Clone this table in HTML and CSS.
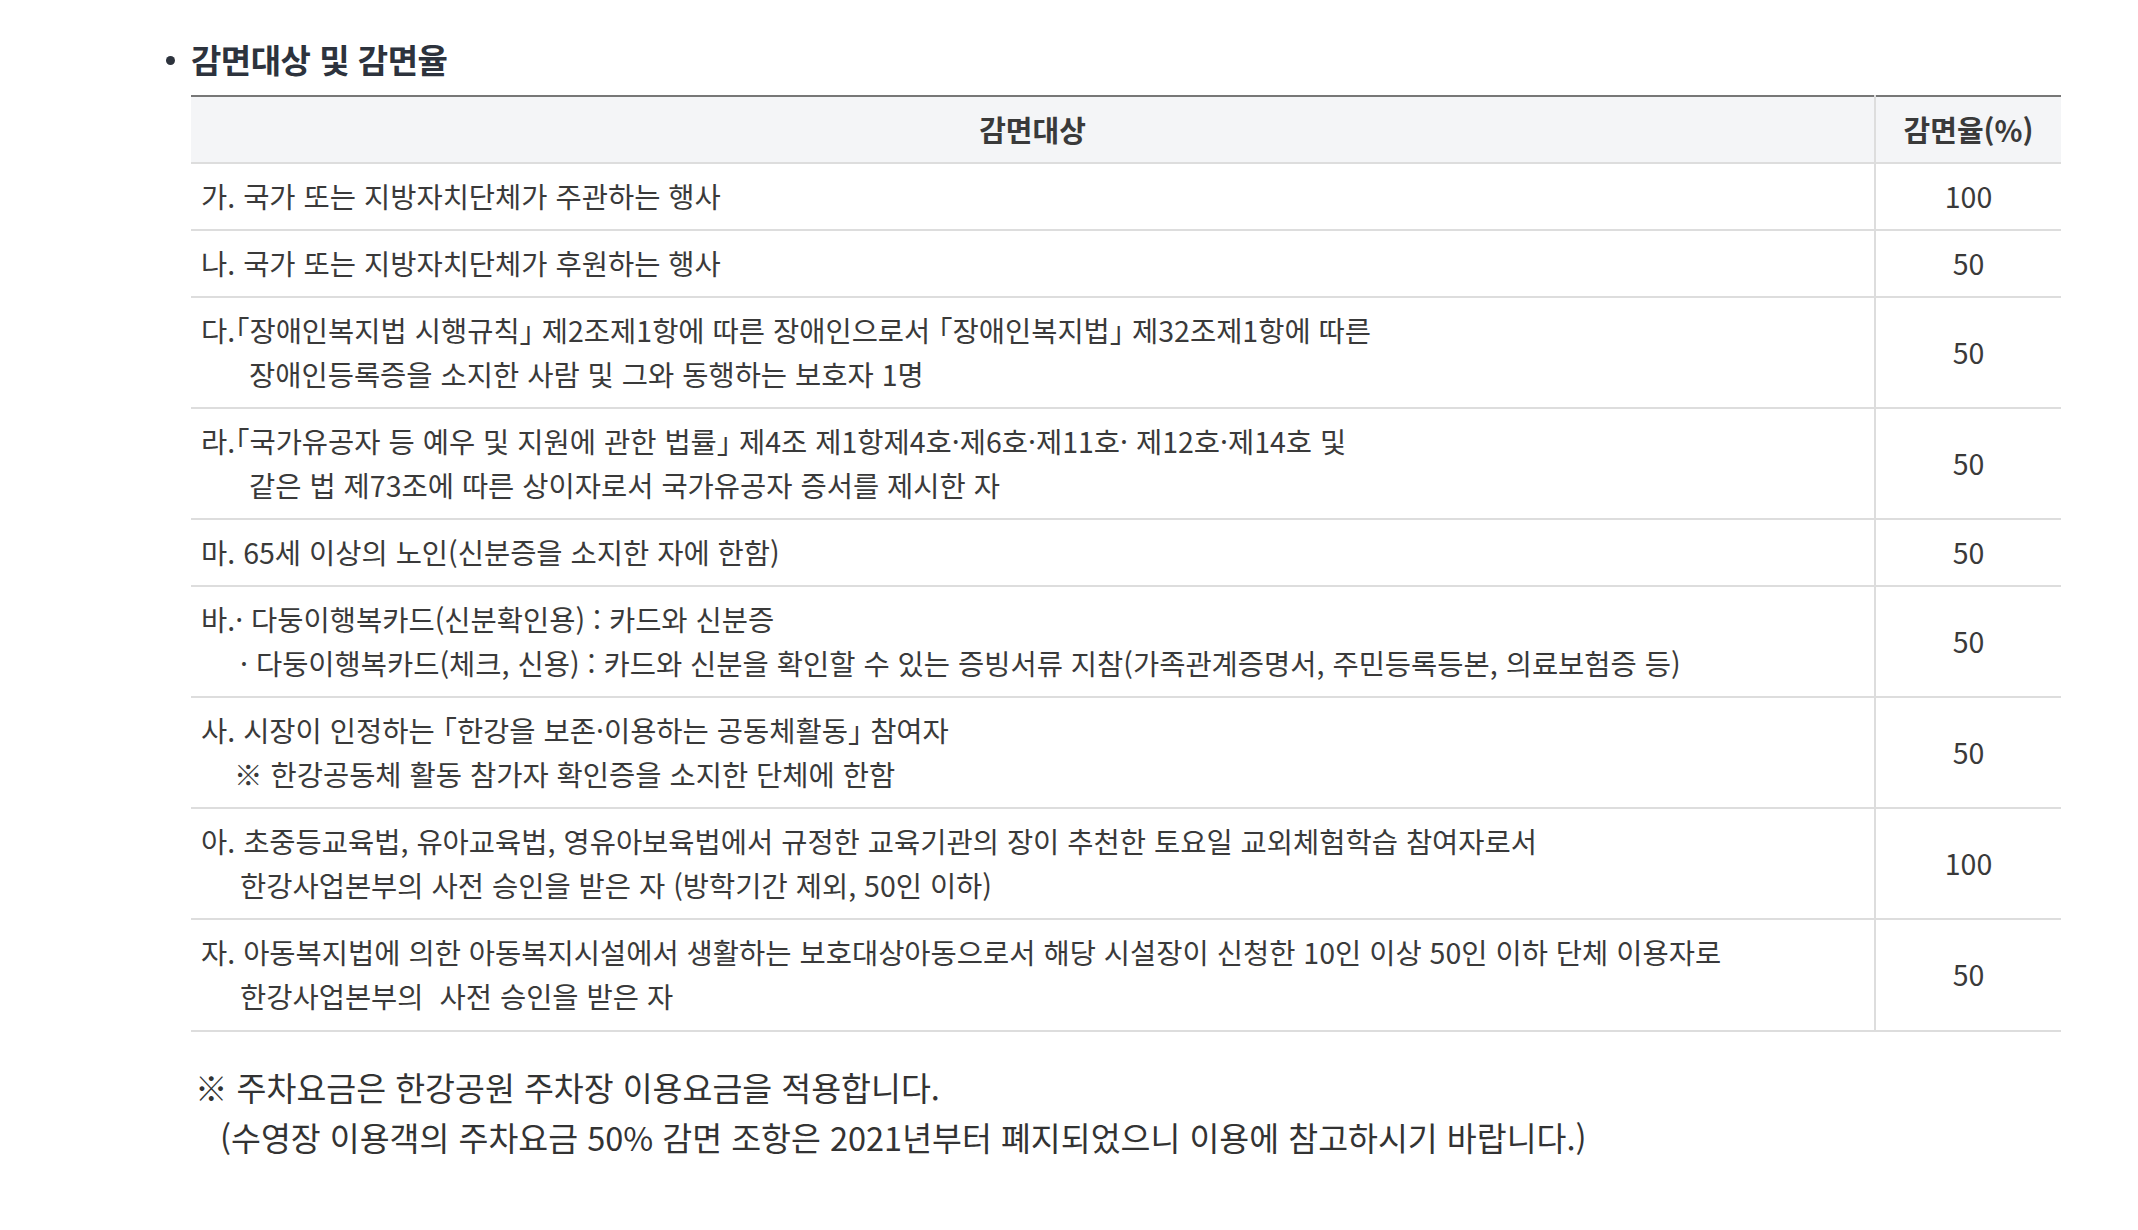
FILE: index.html
```html
<!DOCTYPE html>
<html lang="ko">
<head>
<meta charset="UTF-8">
<meta name="viewport" content="width=device-width, initial-scale=1.0">
<title>감면대상 및 감면율</title>
<link rel="stylesheet" href="styles.css">
</head>
<body>
<div class="content">
  <h3 class="sub-title">감면대상 및 감면율</h3>
  <table class="rate-table">
    <thead>
      <tr>
        <th>감면대상</th>
        <th class="col-rate">감면율(%)</th>
      </tr>
    </thead>
    <tbody>
      <tr>
        <td>가. 국가 또는 지방자치단체가 주관하는 행사</td>
        <td class="num">100</td>
      </tr>
      <tr>
        <td>나. 국가 또는 지방자치단체가 후원하는 행사</td>
        <td class="num">50</td>
      </tr>
      <tr>
        <td>다.「장애인복지법 시행규칙」 제2조제1항에 따른 장애인으로서 「장애인복지법」 제32조제1항에 따른<br><span class="ind-1">장애인등록증을 소지한 사람 및 그와 동행하는 보호자 1명</span></td>
        <td class="num">50</td>
      </tr>
      <tr>
        <td>라.「국가유공자 등 예우 및 지원에 관한 법률」 제4조 제1항제4호·제6호·제11호· 제12호·제14호 및<br><span class="ind-1">같은 법 제73조에 따른 상이자로서 국가유공자 증서를 제시한 자</span></td>
        <td class="num">50</td>
      </tr>
      <tr>
        <td>마. 65세 이상의 노인(신분증을 소지한 자에 한함)</td>
        <td class="num">50</td>
      </tr>
      <tr>
        <td>바.· 다둥이행복카드(신분확인용) : 카드와 신분증<br><span class="ind-2">· 다둥이행복카드(체크, 신용) : 카드와 신분을 확인할 수 있는 증빙서류 지참(가족관계증명서, 주민등록등본, 의료보험증 등)</span></td>
        <td class="num">50</td>
      </tr>
      <tr>
        <td>사. 시장이 인정하는 「한강을 보존·이용하는 공동체활동」 참여자<br><span class="ind-3">※ 한강공동체 활동 참가자 확인증을 소지한 단체에 한함</span></td>
        <td class="num">50</td>
      </tr>
      <tr>
        <td>아. 초중등교육법, 유아교육법, 영유아보육법에서 규정한 교육기관의 장이 추천한 토요일 교외체험학습 참여자로서<br><span class="ind-2">한강사업본부의 사전 승인을 받은 자 (방학기간 제외, 50인 이하)</span></td>
        <td class="num">100</td>
      </tr>
      <tr>
        <td>자. 아동복지법에 의한 아동복지시설에서 생활하는 보호대상아동으로서 해당 시설장이 신청한 10인 이상 50인 이하 단체 이용자로<br><span class="ind-2">한강사업본부의&nbsp; 사전 승인을 받은 자</span></td>
        <td class="num">50</td>
      </tr>
    </tbody>
  </table>
  <p class="note">※ 주차요금은 한강공원 주차장 이용요금을 적용합니다.<br><span class="note-sub">(수영장 이용객의 주차요금 50% 감면 조항은 2021년부터 폐지되었으니 이용에 참고하시기 바랍니다.)</span></p>
</div>
</body>
</html>
```

FILE: styles.css
```css
body {
  margin: 0;
  padding: 0;
  background-color: #fff;
  font-family: "Noto Sans CJK KR", "Noto Sans", sans-serif;
  color: #3a3a3a;
}
.content {
  padding: 37px 77px 0 191px;
}
.sub-title {
  position: relative;
  margin: 0 0 14px 0;
  font-size: 33px;
  line-height: 44px;
  font-weight: 700;
  color: #2d333d;
  letter-spacing: -0.5px;
}
.sub-title::before {
  content: "";
  position: absolute;
  left: -25px;
  top: 19px;
  width: 9px;
  height: 9px;
  border-radius: 50%;
  background-color: #2d333d;
}
.rate-table {
  width: 100%;
  border-collapse: collapse;
  border-top: 2px solid #777;
  font-size: 28.5px;
  line-height: 44px;
}
.rate-table th {
  background-color: #f4f5f7;
  font-size: 29px;
  font-weight: 700;
  color: #3a3a3a;
  padding: 10px 10px 11px;
  border-bottom: 2px solid #ddd;
}
.rate-table td {
  padding: 10px 10px 11px;
  border-bottom: 2px solid #ddd;
  color: #3a3a3a;
  text-align: left;
  font-feature-settings: "halt";
}
.rate-table tbody tr:last-child td {
  padding-bottom: 12px;
}
.rate-table th + th,
.rate-table td + td {
  border-left: 2px solid #ddd;
}
.rate-table .col-rate {
  width: 165px;
}
.rate-table .num {
  text-align: center;
}
.ind-1 {
  padding-left: 48px;
}
.ind-2 {
  padding-left: 39px;
}
.ind-3 {
  padding-left: 33px;
}
.note {
  margin: 30px 0 0 4px;
  font-size: 32.5px;
  line-height: 50px;
  color: #333;
}
.note-sub {
  padding-left: 25px;
}
```
